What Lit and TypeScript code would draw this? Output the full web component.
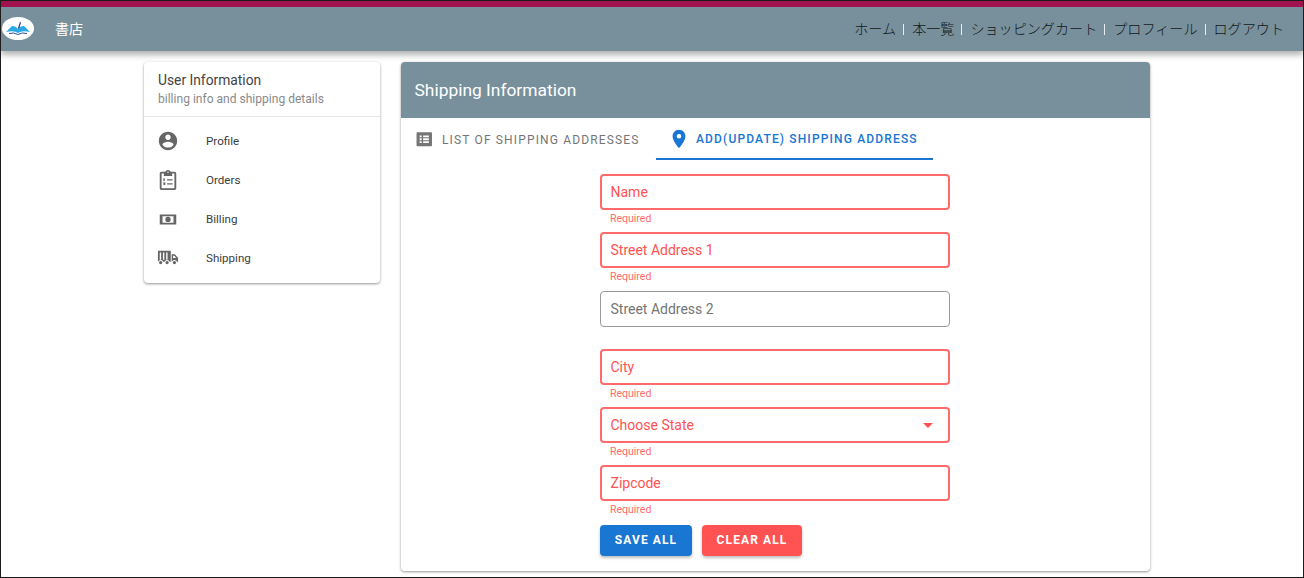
import { LitElement, html, css, svg } from "lit";
import { customElement } from "lit/decorators.js";

const icon = (d: string) =>
  html`<svg viewBox="0 0 24 24" fill="currentColor" fill-rule="evenodd">${svg`<path d=${d}></path>`}</svg>`;

const ICONS = {
  profile:
    "M12 2C6.48 2 2 6.48 2 12s4.48 10 10 10 10-4.48 10-10S17.52 2 12 2zm0 3c1.66 0 3 1.34 3 3s-1.34 3-3 3-3-1.34-3-3 1.34-3 3-3zm0 14.2c-2.5 0-4.71-1.28-6-3.22.03-1.99 4-3.08 6-3.08 1.99 0 5.97 1.09 6 3.08-1.29 1.94-3.5 3.22-6 3.22z",
  orders:
    "M19 3h-4.18C14.4 1.84 13.3 1 12 1s-2.4.84-2.82 2H5c-1.1 0-2 .9-2 2v16c0 1.1.9 2 2 2h14c1.1 0 2-.9 2-2V5c0-1.1-.9-2-2-2zm-7-.25c.41 0 .75.34.75.75s-.34.75-.75.75-.75-.34-.75-.75.34-.75.75-.75zM19 21H5V5h2.5v2.5h9V5H19v16zM7 10h1.5v3H7zm0 4.5h2v3H7zm4-3.3h6v1.4h-6zm0 4.4h6V17h-6z",
  billing:
    "M3 7h18v11H3V7zm3 2v7h12V9H6zm6 .6a2.9 2.9 0 1 1 0 5.8 2.9 2.9 0 0 1 0-5.8z",
  shipping:
    "M1 4h14v12h-1.2a3 3 0 0 0-5.6 0H6.8a3 3 0 0 0-5.6 0H1V4zm2 2v8h1.5V6H3zm3.5 0v8H8V6H6.5zM10 6v8h1.5V6H10zm6 2h3.5l3.5 4v4h-1.2a3 3 0 0 0-5.6 0H16V8zm1.5 1.5V12h3.4l-2.1-2.5h-1.3zM4 15.2a1.8 1.8 0 1 1 0 3.6 1.8 1.8 0 0 1 0-3.6zm7 0a1.8 1.8 0 1 1 0 3.6 1.8 1.8 0 0 1 0-3.6zm8 0a1.8 1.8 0 1 1 0 3.6 1.8 1.8 0 0 1 0-3.6z",
  list:
    "M3 3h18c.55 0 1 .45 1 1v16c0 .55-.45 1-1 1H3c-.55 0-1-.45-1-1V4c0-.55.45-1 1-1zm3 4v2.4h2.6V7H6zm4.6 0v2.4H18V7h-7.4zM6 10.8v2.4h2.6v-2.4H6zm4.6 0v2.4H18v-2.4h-7.4zM6 14.6V17h2.6v-2.4H6zm4.6 0V17H18v-2.4h-7.4z",
  pin:
    "M12 2C8.13 2 5 5.13 5 9c0 5.25 7 13 7 13s7-7.75 7-13c0-3.87-3.13-7-7-7zm0 9.5a2.5 2.5 0 0 1 0-5 2.5 2.5 0 0 1 0 5z",
};

const NAV = ["ホーム", "本一覧", "ショッピングカート", "プロフィール", "ログアウト"];
const MENU = [
  { label: "Profile", icon: ICONS.profile },
  { label: "Orders", icon: ICONS.orders },
  { label: "Billing", icon: ICONS.billing },
  { label: "Shipping", icon: ICONS.shipping },
];
const FIELDS = [
  { label: "Name", error: true },
  { label: "Street Address 1", error: true },
  { label: "Street Address 2", error: false },
  { label: "City", error: true },
  { label: "Choose State", error: true, select: true },
  { label: "Zipcode", error: true },
];

@customElement("app-root")
export class AppRoot extends LitElement {
  static styles = css`
    :host {
      display: block;
      box-sizing: border-box;
      height: 578px;
      overflow: hidden;
      border: 1px solid #1c1c1c;
      background: #fff;
      font-family: Roboto, "Noto Sans CJK JP", sans-serif;
      color: rgba(0, 0, 0, 0.87);
    }

    .topbar {
      height: 44px;
      box-sizing: content-box;
      border-top: 6px solid #a0134f;
      background: #78909c;
      display: flex;
      align-items: center;
      justify-content: space-between;
      box-shadow: 0 4px 6px rgba(0, 0, 0, 0.3);
    }

    .brand {
      display: flex;
      align-items: center;
      padding-bottom: 2px;
      color: #fff;
      font-size: 14px;
      font-family: "Noto Sans CJK JP", sans-serif;
    }

    .logo {
      width: 32px;
      height: 23px;
      margin: 0 21px 0 1px;
      display: block;
    }

    .nav {
      display: flex;
      align-items: center;
      padding: 0 19px 2px 0;
      font-family: "Noto Sans CJK JP", sans-serif;
      font-size: 14.1px;
      font-weight: 300;
      color: #11171a;
    }

    .nav .sep {
      width: 1px;
      height: 11px;
      background: #e8eef0;
      margin: 2px 8px 0 7px;
    }

    .page {
      display: flex;
      align-items: flex-start;
      gap: 21px;
      padding: 11px 0 0 143px;
    }

    .side {
      width: 236px;
      height: 221px;
      flex: none;
      border-radius: 4px;
      box-shadow: 0 1px 3px rgba(0, 0, 0, 0.32), 0 1px 2px rgba(0, 0, 0, 0.12);
    }

    .side-head {
      height: 55px;
      box-sizing: border-box;
      padding: 9px 14px 0;
      border-bottom: 1px solid #e6e6e6;
    }

    .side-title {
      font-size: 13.8px;
      line-height: 19px;
      color: #444;
    }

    .side-sub {
      font-size: 12.05px;
      line-height: 18px;
      color: #8a8a8a;
    }

    .menu {
      padding-top: 4px;
    }

    .menu-item {
      height: 39px;
      display: flex;
      align-items: center;
      font-size: 11.6px;
      font-weight: 400;
      color: #3c3c3c;
      padding-left: 13px;
    }

    .menu-item svg {
      color: #666;
      width: 22px;
      height: 22px;
      margin-right: 27px;
      flex: none;
    }

    .main {
      width: 749px;
      height: 509px;
      flex: none;
      border-radius: 4px;
      box-shadow: 0 1px 3px rgba(0, 0, 0, 0.32), 0 1px 2px rgba(0, 0, 0, 0.12);
    }

    .main-head {
      height: 56px;
      box-sizing: border-box;
      padding-left: 13.5px;
      display: flex;
      align-items: center;
      background: #78909c;
      border-radius: 4px 4px 0 0;
      color: #fff;
      font-size: 17.4px;
    }

    .tabs {
      display: flex;
      height: 42px;
      font-size: 12px;
      font-weight: 400;
      letter-spacing: 1.15px;
    }

    .tab {
      display: flex;
      align-items: center;
      box-sizing: border-box;
      color: #757575;
      height: 42px;
      padding-top: 1px;
    }

    .tab.list {
      width: 255px;
      padding-left: 14px;
    }

    .tab.add {
      width: 277px;
      padding-left: 12px;
      color: #1976d2;
      border-bottom: 2px solid #1976d2;
      font-weight: 500;
      letter-spacing: 1.15px;
    }

    .tab svg {
      width: 18.5px;
      height: 18.5px;
      margin-right: 8.5px;
      flex: none;
    }

    .tab.add svg {
      width: 22px;
      height: 22px;
      margin-right: 6px;
    }

    .form {
      width: 350px;
      margin: 14px 0 0 199px;
    }

    .field {
      height: 58.3px;
    }

    .box {
      height: 36px;
      box-sizing: border-box;
      border: 1px solid #9a9a9a;
      border-radius: 4px;
      padding: 0 10px 0 9.5px;
      display: flex;
      align-items: center;
      justify-content: space-between;
      font-size: 14px;
      color: #757575;
    }

    .field.err .box {
      border: 2px solid #ff6a6a;
      padding: 0 9px 0 8.5px;
      color: #ff5252;
    }

    .help {
      font-size: 10.5px;
      line-height: 16px;
      padding: 1px 0 0 10px;
      color: #ff6b6b;
    }

    .caret {
      width: 0;
      height: 0;
      margin-right: 6px;
      border-left: 5px solid transparent;
      border-right: 5px solid transparent;
      border-top: 5px solid #ff5252;
    }

    .actions {
      display: flex;
      gap: 10px;
      margin-top: 1px;
    }

    .btn {
      height: 31px;
      border: none;
      border-radius: 4px;
      padding: 0;
      color: #fff;
      font-family: inherit;
      font-size: 12px;
      font-weight: 700;
      letter-spacing: 1.1px;
      box-shadow: 0 2px 3px rgba(0, 0, 0, 0.25);
    }

    .btn.save {
      width: 92px;
      background: #1976d2;
    }

    .btn.clear {
      width: 100px;
      background: #ff5252;
    }
  `;

  render() {
    return html`
      <header class="topbar">
        <div class="brand">
          <svg class="logo" viewBox="0 0 32 23">
            <ellipse cx="16" cy="11.5" rx="16" ry="11.5" fill="#fff"></ellipse>
            <path d="M4 15 L10 9 Q14 9 16 12 Q18 9 22 9 L28 15 Q20 13 16 16 Q12 13 4 15z" fill="#29a8e8"></path>
            <path d="M16 11 L18 5 L19 5.5 L17 12z" fill="#2a2f7a"></path>
            <path d="M7 16.5 Q12 15 16 17.5 Q20 15 25 16.5" stroke="#2a4f9a" fill="none"></path>
          </svg>
          書店
        </div>
        <nav class="nav">
          ${NAV.map(
            (n, i) => html`${i > 0 ? html`<span class="sep"></span>` : ""}<span>${n}</span>`
          )}
        </nav>
      </header>
      <div class="page">
        <aside class="side">
          <div class="side-head">
            <div class="side-title">User Information</div>
            <div class="side-sub">billing info and shipping details</div>
          </div>
          <div class="menu">
            ${MENU.map((m) => html`<div class="menu-item">${icon(m.icon)}${m.label}</div>`)}
          </div>
        </aside>
        <section class="main">
          <div class="main-head">Shipping Information</div>
          <div class="tabs">
            <div class="tab list">${icon(ICONS.list)}LIST OF SHIPPING ADDRESSES</div>
            <div class="tab add">${icon(ICONS.pin)}ADD(UPDATE) SHIPPING ADDRESS</div>
          </div>
          <div class="form">
            ${FIELDS.map(
              (f) => html`<div class="field ${f.error ? "err" : ""}">
                <div class="box">
                  <span>${f.label}</span>
                  ${f.select ? html`<span class="caret"></span>` : ""}
                </div>
                ${f.error ? html`<div class="help">Required</div>` : ""}
              </div>`
            )}
            <div class="actions">
              <button class="btn save">SAVE ALL</button>
              <button class="btn clear">CLEAR ALL</button>
            </div>
          </div>
        </section>
      </div>
    `;
  }
}
